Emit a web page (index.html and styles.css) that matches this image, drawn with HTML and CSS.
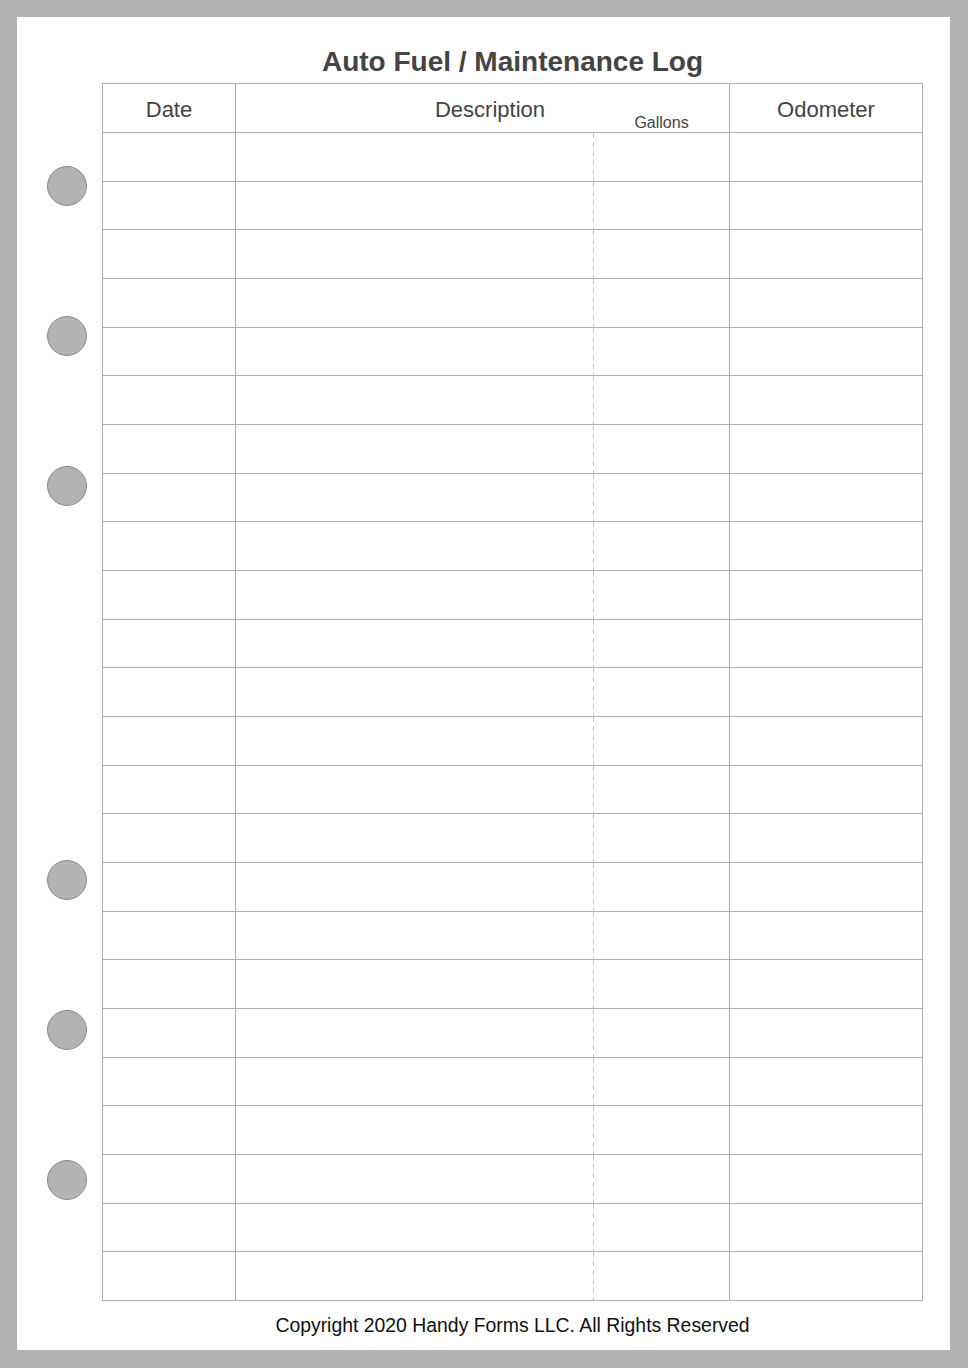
FILE: index.html
```html
<!DOCTYPE html>
<html lang="en">
<head>
    <meta charset="UTF-8">
    <meta name="viewport" content="width=device-width, initial-scale=1.0">
    <title>Auto Fuel / Maintenance Log</title>
    <link rel="stylesheet" href="styles.css">
</head>
<body>

    <div class="page">

        <!-- Binder holes -->
        <div class="binder">
            <div class="hole-group">
                <span class="hole"></span>
                <span class="hole"></span>
                <span class="hole"></span>
            </div>
            <div class="hole-group">
                <span class="hole"></span>
                <span class="hole"></span>
                <span class="hole"></span>
            </div>
        </div>

        <!-- Log sheet -->
        <main class="sheet">
            <h1>Auto Fuel / Maintenance Log</h1>

            <div class="log" id="log">
                <div class="log-head">
                    <div class="cell date">Date</div>
                    <div class="cell desc">Description</div>
                    <div class="cell gallons">Gallons</div>
                    <div class="cell odo">Odometer</div>
                </div>
            </div>

            <p class="copyright">Copyright 2020 Handy Forms LLC. All Rights Reserved</p>
        </main>
    </div>

    <script>
        // Build the 24 blank log rows
        const log = document.getElementById("log");
        for (let i = 0; i < 24; i++) {
            const row = document.createElement("div");
            row.classList.add("log-row");
            row.innerHTML = `
                <div class="cell date"></div>
                <div class="cell desc"></div>
                <div class="cell gallons"></div>
                <div class="cell odo"></div>
            `;
            log.appendChild(row);
        }
    </script>

</body>
</html>
```

FILE: styles.css
```css
body {
    margin: 0;
    padding: 0;
    font-family: "Liberation Sans", Arial, sans-serif;
    background: #ffffff;
}

/* Page with grey frame */
.page {
    box-sizing: border-box;
    width: 968px;
    height: 1368px;
    border-style: solid;
    border-color: #b3b3b3;
    border-width: 17px 18px 18px 17px;
    background: #ffffff;
    padding-top: 28px;
    display: flex;
}

/* Binder Holes */
.binder {
    width: 85px;
    padding-top: 121px;
    flex-shrink: 0;
}

.hole-group {
    display: flex;
    flex-direction: column;
    gap: 110px;
    padding-left: 30px;
}

.hole-group + .hole-group {
    margin-top: 354px;
}

.hole {
    display: block;
    box-sizing: border-box;
    width: 40px;
    height: 40px;
    border-radius: 50%;
    background: #b3b3b3;
    border: 1px solid #8c8c8c;
}

/* Sheet */
.sheet {
    width: 821px;
}

.sheet h1 {
    margin: 0 0 4px;
    font-size: 28px;
    line-height: 34px;
    font-weight: bold;
    text-align: center;
    color: #444444;
}

/* Log Table */
.log {
    box-sizing: border-box;
    height: 1218px;
    border: 1px solid #b0b0b0;
    display: flex;
    flex-direction: column;
}

.log-head,
.log-row {
    display: grid;
    grid-template-columns: 133px 358px 136px 1fr;
    box-sizing: border-box;
    border-bottom: 1px solid #b0b0b0;
}

.log-head {
    height: 49px;
    color: #444444;
}

.log-row {
    flex: 1;
}

.log-row:last-child {
    border-bottom: none;
}

.cell {
    box-sizing: border-box;
}

.date,
.gallons {
    border-right: 1px solid #b0b0b0;
}

.log-row .desc {
    background: repeating-linear-gradient(to bottom, #c6c6c6 0 5px, transparent 5px 9px) right top / 1px 100% no-repeat;
}

.log-head .cell {
    font-size: 22px;
    line-height: 26px;
    padding-top: 13px;
    text-align: center;
}

.log-head .desc {
    padding-left: 150px;
}

.log-head .gallons {
    font-size: 16px;
    line-height: 18px;
    padding-top: 30px;
}

/* Footer */
.copyright {
    margin: 13px 0 0;
    font-size: 19.4px;
    line-height: 22px;
    text-align: center;
    color: #111111;
}
```
